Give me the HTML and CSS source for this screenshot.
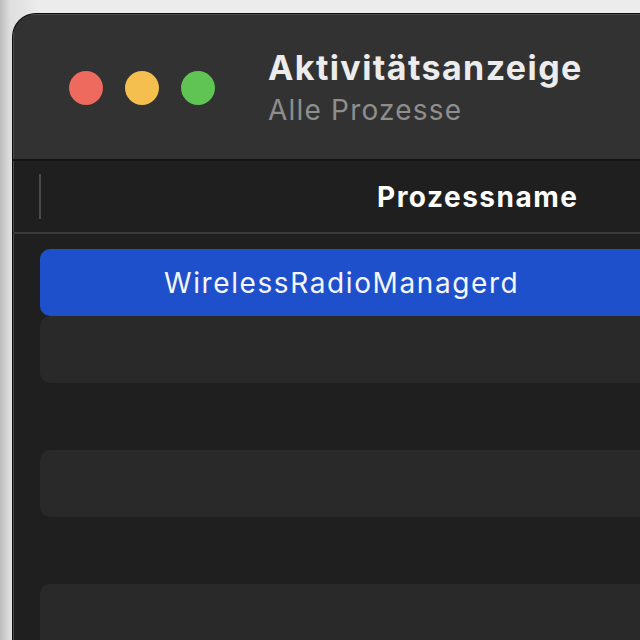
FILE: index.html
```html
<!DOCTYPE html>
<html lang="de">
<head>
<meta charset="utf-8">
<title>Aktivitätsanzeige</title>
<link rel="stylesheet" href="styles.css">
</head>
<body>
<div class="window">
  <div class="titlebar">
    <div class="lights">
      <span class="light red"></span>
      <span class="light yellow"></span>
      <span class="light green"></span>
    </div>
    <div class="titles">
      <div class="title">Aktivitätsanzeige</div>
      <div class="subtitle">Alle Prozesse</div>
    </div>
  </div>
  <div class="header">
    <span class="divider"></span>
    <span class="col-name">Prozessname</span>
  </div>
  <div class="rows">
    <div class="row selected"><span class="cell-name">WirelessRadioManagerd</span></div>
    <div class="row stripe"></div>
    <div class="row"></div>
    <div class="row stripe"></div>
    <div class="row"></div>
    <div class="row stripe"></div>
  </div>
</div>
</body>
</html>
```
FILE: styles.css
```css
html, body {
  margin: 0;
  padding: 0;
  width: 640px;
  height: 640px;
  overflow: hidden;
}
body {
  background: linear-gradient(90deg, #bdbdbd 0px, #dedede 10px, #ececec 40px);
  font-family: Inter, "Noto Sans", sans-serif;
}
.window {
  box-sizing: border-box;
  margin: 13px 0 0 12px;
  width: 628px;
  height: 627px;
  border: 1px solid #0c0c0c;
  border-right: none;
  border-bottom: none;
  border-radius: 24px 0 0 0;
  background: #1e1f1e;
  overflow: hidden;
}
.titlebar {
  height: 145px;
  background: #323232;
  border-bottom: 2px solid #151515;
  display: flex;
  align-items: flex-start;
  box-shadow: inset 1px 1px 0 #4c4c4c;
}
.lights {
  display: flex;
  gap: 22px;
  padding: 57px 0 0 56px;
}
.light {
  width: 34px;
  height: 34px;
  border-radius: 50%;
}
.red { background: #ee6a5e; }
.yellow { background: #f5bf4f; }
.green { background: #5fc454; }
.titles {
  padding: 34px 0 0 53px;
}
.title {
  color: #ececec;
  font-size: 34px;
  font-weight: 700;
  line-height: 40px;
  letter-spacing: 1.4px;
}
.subtitle {
  color: #8e8e8e;
  font-size: 28px;
  line-height: 36px;
  margin-top: 4px;
  letter-spacing: 1.2px;
}
.header {
  height: 71px;
  border-bottom: 2px solid #393a39;
  display: flex;
  align-items: center;
  box-shadow: inset 1px 0 0 #4c4c4c;
}
.divider {
  width: 2px;
  height: 45px;
  background: #4a4a4a;
  margin-left: 26px;
}
.col-name {
  color: #ffffff;
  font-size: 28px;
  font-weight: 700;
  margin-left: 336px;
  letter-spacing: 1.5px;
}
.rows {
  padding: 15px 0 0 27px;
  display: flex;
  flex-direction: column;
  box-shadow: inset 1px 0 0 #4c4c4c;
  height: 400px;
}
.row {
  flex: none;
  height: 67px;
  border-radius: 10px 0 0 10px;
  display: flex;
  align-items: center;
}
.row.stripe { background: #282928; }
.row.selected { background: #1f50cc; }
.cell-name {
  color: #f4f6fb;
  font-size: 28px;
  margin-left: 124px;
  letter-spacing: 1.6px;
}
```
